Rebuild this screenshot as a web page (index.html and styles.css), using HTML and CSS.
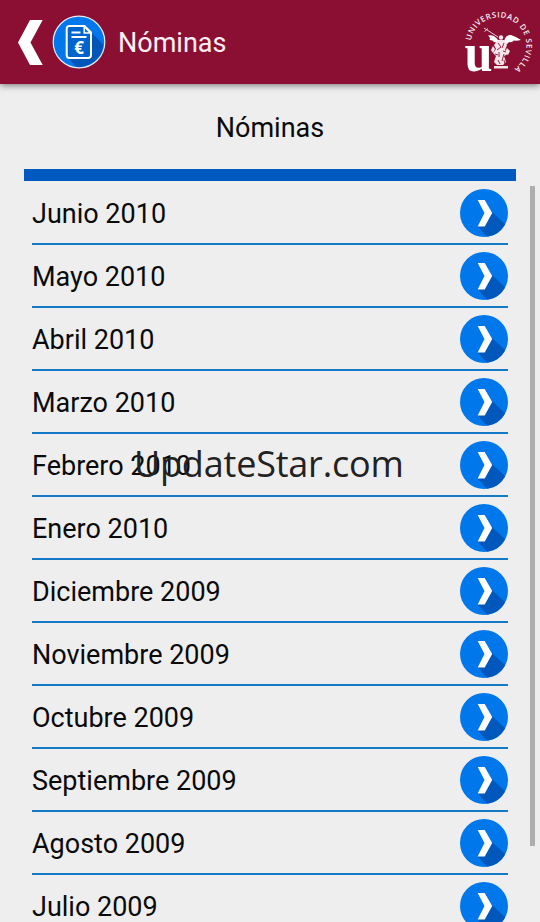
FILE: index.html
```
<!DOCTYPE html>
<html lang="es">
<head>
    <meta charset="UTF-8">
    <meta name="viewport" content="width=device-width, initial-scale=1.0">
    <title>Nóminas</title>
    <link rel="stylesheet" href="styles.css">
</head>
<body>
    <svg class="defs" width="0" height="0">
        <symbol id="arrow" viewBox="0 0 48 48">
            <circle cx="24" cy="24" r="24" fill="#0078ec"/>
            <path d="M31.5 22.5 L45.2 35.2 A24 24 0 0 1 27 47.8 L17.7 37.5 Z" fill="#0058bd"/>
            <path d="M17.7 11 H24.7 L32.2 24 L24.7 37.5 H17.7 L24.5 24 Z" fill="#fff"/>
        </symbol>
    </svg>

    <header class="header">
        <svg class="back" viewBox="0 0 25 45">
            <path d="M12 0 H24.7 L12.5 22.5 L24.7 45 H12 L0 22.5 Z" fill="#fff"/>
        </svg>
        <svg class="app-icon" viewBox="0 0 54 54">
            <circle cx="27" cy="27" r="25.8" fill="#0078ec"/>
            <path d="M39 17 L51.5 30 A26 26 0 0 1 25 52.5 L16 43 Z" fill="#0055b8"/>
            <circle cx="27" cy="27" r="25.8" fill="none" stroke="#e4edf8" stroke-width="1.2"/>
            <path d="M17.5 11 H32.5 L39 17.5 V40 Q39 43 36 43 H17.5 Q14.7 43 14.7 40 V14 Q14.7 11 17.5 11 Z" fill="#0064cf" stroke="#fff" stroke-width="2"/>
            <path d="M32.2 11.5 V18 H38.5 Z" fill="#0078ec" stroke="#fff" stroke-width="1.5"/>
            <path d="M19.5 17.5 H28.5 M19.5 22 H34.5" stroke="#fff" stroke-width="2"/>
            <text class="euro" x="27" y="39" text-anchor="middle">€</text>
        </svg>
        <h1 class="header-title">Nóminas</h1>
        <svg class="logo" viewBox="0 0 76 76">
            <path id="ring" d="M10.9 36.6 A28 28 0 1 1 52.5 65.7" fill="none"/>
            <text class="ring-text"><textPath href="#ring" textLength="110">UNIVERSIDAD DE SEVILLA</textPath></text>
            <text class="logo-u" x="4.5" y="67.3" textLength="28" lengthAdjust="spacingAndGlyphs">u</text>
            <g fill="#f6e6ec">
                <path d="M38 36 Q34 30 28 31.5 Q31 34 29.5 36 Q33 36 34 38 Q36 38 38 40 Z" fill="#fff"/>
                <path d="M44 37 Q46 30 51 31 Q57 33 61 36 Q57 37 54 36.5 Q52 39 49 38 Q47 41 44 40 Z" fill="#fff"/>
                <circle cx="41" cy="33.5" r="2.2"/>
                <path d="M38 36 L44 36 L47 41 L45 46 L48 50 L44 52 L46 58 L43 61 H37 L34 58 L36 52 L33 49 L36 45 L34 41 Z"/>
                <path d="M33 42 L35 45 L33 49 L31 46 Z M47 44 L50 47 L48 51 L45 48 Z"/>
                <path d="M34 62 H48 V64.5 H34 Z"/>
            </g>
            <path d="M24 24 L38 33 M24.500 27.500 L28 24.500" fill="none" stroke="#f6e6ec" stroke-width=".9"/>
            <path d="M38 39 L41 43 L37 46 M44 39 L42 44 M39 48 V53 M44 50 L42 57 M38 56 L40 60 M44 56 L45 60 M35 50 L38 51 M43 47 L46 48" fill="none" stroke="#8b0f32" stroke-width=".9"/>
        </svg>
    </header>

    <main class="content">
        <h2 class="title">Nóminas</h2>
        <ul class="list">
            <li class="row">Junio 2010<svg class="arrow"><use href="#arrow"/></svg></li>
            <li class="row">Mayo 2010<svg class="arrow"><use href="#arrow"/></svg></li>
            <li class="row">Abril 2010<svg class="arrow"><use href="#arrow"/></svg></li>
            <li class="row">Marzo 2010<svg class="arrow"><use href="#arrow"/></svg></li>
            <li class="row">Febrero 2010<svg class="arrow"><use href="#arrow"/></svg></li>
            <li class="row">Enero 2010<svg class="arrow"><use href="#arrow"/></svg></li>
            <li class="row">Diciembre 2009<svg class="arrow"><use href="#arrow"/></svg></li>
            <li class="row">Noviembre 2009<svg class="arrow"><use href="#arrow"/></svg></li>
            <li class="row">Octubre 2009<svg class="arrow"><use href="#arrow"/></svg></li>
            <li class="row">Septiembre 2009<svg class="arrow"><use href="#arrow"/></svg></li>
            <li class="row">Agosto 2009<svg class="arrow"><use href="#arrow"/></svg></li>
            <li class="row">Julio 2009<svg class="arrow"><use href="#arrow"/></svg></li>
        </ul>
    </main>
    <div class="scrollbar"></div>
    <div class="watermark">UpdateStar.com</div>
</body>
</html>
```
FILE: styles.css
```
body {
    margin: 0;
    height: 922px;
    position: relative;
    overflow: hidden;
    background-color: #eee;
    color: #0a0a0a;
    font-family: Roboto, sans-serif;
}
.defs {
    position: absolute;
}
.header {
    height: 84px;
    box-sizing: border-box;
    padding: 0 4px 0 18px;
    display: flex;
    align-items: center;
    background-color: #8b0f32;
    box-shadow: 0 1px 7px rgba(0, 0, 0, 0.55);
}
.back {
    width: 25px;
    height: 45px;
    margin-right: 9px;
    flex: none;
}
.app-icon {
    width: 54px;
    height: 54px;
    margin-right: 12px;
    flex: none;
}
.euro {
    font: bold 17px "Open Sans", sans-serif;
    fill: #fff;
}
.header-title {
    margin: 0;
    padding-top: 2px;
    flex: 1;
    font-size: 27px;
    font-weight: 400;
    line-height: 32px;
    color: #fbeff3;
}
.logo {
    width: 76px;
    height: 76px;
    flex: none;
}
.ring-text {
    font: 600 7.8px "Open Sans", sans-serif;
    fill: #f9edf1;
}
.logo-u {
    font: bold 55px "Liberation Serif", serif;
    fill: #fff;
}
.content {
    padding: 0 24px;
}
.title {
    margin: 0;
    height: 85px;
    line-height: 88px;
    text-align: center;
    font-size: 27px;
    font-weight: 400;
}
.list {
    margin: 0;
    padding: 1px 8px 0;
    list-style: none;
    border-top: 12px solid #0059bf;
}
.row {
    height: 63px;
    box-sizing: border-box;
    padding-top: 3px;
    display: flex;
    align-items: center;
    justify-content: space-between;
    border-bottom: 2px solid #147ac6;
    font-size: 27px;
}
.arrow {
    width: 48px;
    height: 48px;
    margin-top: -2px;
    flex: none;
}
.scrollbar {
    position: absolute;
    top: 186px;
    right: 5px;
    width: 5px;
    height: 660px;
    background-color: #aeaeae;
}
.watermark {
    position: absolute;
    top: 439px;
    left: 134px;
    font-family: "Open Sans", sans-serif;
    font-size: 36px;
    line-height: 50px;
    letter-spacing: -0.2px;
    color: #222;
}
```
